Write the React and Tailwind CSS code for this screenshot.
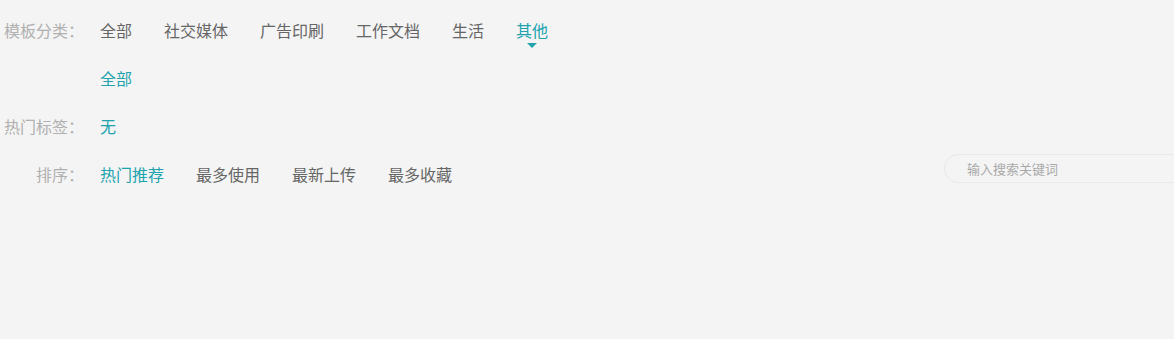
import React from 'react';

const categories = ['全部', '社交媒体', '广告印刷', '工作文档', '生活', '其他'];
const sorts = ['热门推荐', '最多使用', '最新上传', '最多收藏'];

const Label = ({ children }) => (
  <div className="w-[84px] shrink-0 text-right text-[#b0b0b0]">{children}</div>
);

const Item = ({ active, caret, children }) => (
  <span className={`relative cursor-pointer ${active ? 'text-[#21a3ae]' : 'text-[#666]'}`}>
    {children}
    {caret && (
      <span className="absolute left-1/2 top-[37px] -translate-x-1/2 w-0 h-0 border-l-[5px] border-r-[5px] border-t-[5px] border-l-transparent border-r-transparent border-t-[#21a3ae]"></span>
    )}
  </span>
);

const App = () => {
  return (
    <div
      className="min-h-screen w-full overflow-hidden bg-[#f4f4f4] text-[16px] pt-[6px]"
      style={{ fontFamily: '"Noto Sans CJK SC", "Noto Sans", sans-serif' }}
    >
      <div className="flex h-12 leading-[48px]">
        <Label>模板分类：</Label>
        <div className="ml-4 flex gap-8">
          {categories.map((c) => (
            <Item key={c} active={c === '其他'} caret={c === '其他'}>
              {c}
            </Item>
          ))}
        </div>
      </div>

      <div className="flex h-12 leading-[48px]">
        <div className="w-[84px] shrink-0"></div>
        <div className="ml-4">
          <Item active>全部</Item>
        </div>
      </div>

      <div className="flex h-12 leading-[48px]">
        <Label>热门标签：</Label>
        <div className="ml-4">
          <Item active>无</Item>
        </div>
      </div>

      <div className="flex h-12 leading-[48px]">
        <Label>排序：</Label>
        <div className="ml-4 flex gap-8">
          {sorts.map((s, i) => (
            <Item key={s} active={i === 0}>
              {s}
            </Item>
          ))}
        </div>
        <div className="ml-auto -mr-[20px] mt-[4px] h-[29px] w-[250px] shrink-0 rounded-full border border-[#e8e8e8] bg-[#f4f4f4] flex items-center pl-[22px]">
          <input
            className="w-full bg-transparent text-[13px] leading-[29px] text-[#888] outline-none placeholder:text-[#aaa]"
            placeholder="输入搜索关键词"
          />
        </div>
      </div>
    </div>
  );
};

export default App;
